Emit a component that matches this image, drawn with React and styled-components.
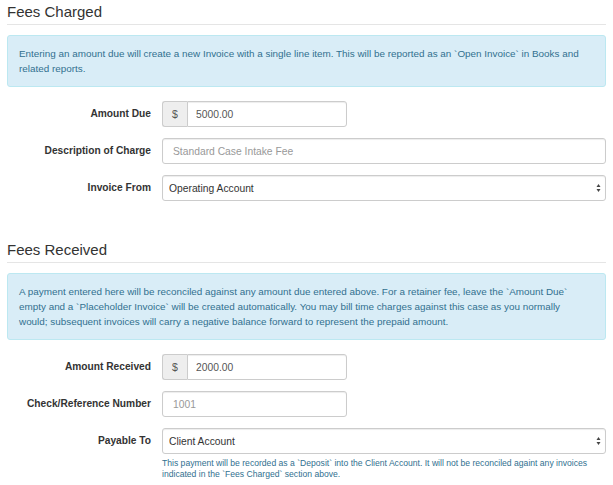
import styled, { createGlobalStyle } from "styled-components";

const GlobalStyle = createGlobalStyle`
  html, body {
    margin: 0;
    padding: 0;
    background: #fff;
  }
  body {
    font-family: "Liberation Sans", Arial, Helvetica, sans-serif;
    font-size: 10.5px;
    line-height: 15px;
    color: #333;
  }
  * {
    box-sizing: border-box;
  }
`;

const Page = styled.div`
  padding: 0 7px;
  width: 613px;
`;

const Section = styled.fieldset`
  border: 0;
  margin: 0;
  padding: 0;
  min-width: 0;
  & + & {
    margin-top: 37px;
  }
`;

const Legend = styled.legend`
  display: block;
  width: 100%;
  padding: 0;
  margin: 0;
  font-size: 15px;
  line-height: 24px;
  color: #333;
  border-bottom: 1px solid #e5e5e5;
`;

const Alert = styled.div`
  margin-top: 10px;
  margin-bottom: 14px;
  padding: 10px 11px;
  background: #d9edf7;
  border: 1px solid #bce8f1;
  border-radius: 3px;
  color: #31708f;
  font-size: 9.9px;
  line-height: 15px;
`;

const Row = styled.div`
  display: grid;
  grid-template-columns: 144px 1fr;
  column-gap: 11px;
  align-items: start;
  & + & {
    margin-top: 11px;
  }
`;

const Label = styled.label`
  text-align: right;
  font-weight: bold;
  font-size: 10.2px;
  line-height: 26px;
  color: #333;
`;

const Field = styled.div`
  width: ${(p) => (p.$short ? "185px" : "100%")};
`;

const InputGroup = styled.div`
  display: flex;
  height: 26px;
`;

const Addon = styled.span`
  width: 25px;
  flex: none;
  display: flex;
  align-items: center;
  justify-content: center;
  background: #eee;
  border: 1px solid #ccc;
  border-right: 0;
  border-radius: 3px 0 0 3px;
  color: #555;
  font-size: 10.5px;
`;

const Input = styled.input`
  display: block;
  width: 100%;
  height: 26px;
  min-width: 0;
  padding: 0 9px;
  font-family: inherit;
  font-size: 10.3px;
  color: #555;
  background: #fff;
  border: 1px solid #ccc;
  border-radius: ${(p) => (p.$joined ? "0 3px 3px 0" : "3px")};
  box-shadow: inset 0 1px 1px rgba(0, 0, 0, 0.075);
  outline: none;
  padding-left: ${(p) => (p.$joined ? "8px" : "10px")};
  &::placeholder {
    color: #999;
  }
`;

const SelectWrap = styled.div`
  position: relative;
  height: 26px;
`;

const Select = styled.select`
  appearance: none;
  -webkit-appearance: none;
  display: block;
  width: 100%;
  height: 26px;
  padding: 0 24px 0 6px;
  font-family: inherit;
  font-size: 10.3px;
  color: #333;
  background: #fff;
  border: 1px solid #ccc;
  border-radius: 3px;
  box-shadow: inset 0 1px 1px rgba(0, 0, 0, 0.075);
  outline: none;
`;

const Arrows = styled.svg`
  position: absolute;
  right: 5px;
  top: 8px;
  pointer-events: none;
`;

const Help = styled.p`
  margin: 4px 0 0;
  font-size: 8.6px;
  line-height: 11px;
  color: #31708f;
`;

const SelectBox = ({ value }) => (
  <SelectWrap>
    <Select defaultValue={value}>
      <option>{value}</option>
    </Select>
    <Arrows width="5" height="10" viewBox="0 0 5 10">
      <path d="M2.5 1 L4.5 4 L0.5 4 Z" fill="#444" />
      <path d="M2.5 9 L4.5 6 L0.5 6 Z" fill="#444" />
    </Arrows>
  </SelectWrap>
);

const Money = ({ value }) => (
  <Field $short>
    <InputGroup>
      <Addon>$</Addon>
      <Input $joined defaultValue={value} />
    </InputGroup>
  </Field>
);

export default function App() {
  return (
    <>
      <GlobalStyle />
      <Page>
        <Section>
          <Legend>Fees Charged</Legend>
          <Alert>
            Entering an amount due will create a new Invoice with a single line
            item. This will be reported as an `Open Invoice` in Books and
            related reports.
          </Alert>
          <Row>
            <Label>Amount Due</Label>
            <Money value="5000.00" />
          </Row>
          <Row>
            <Label>Description of Charge</Label>
            <Field>
              <Input placeholder="Standard Case Intake Fee" />
            </Field>
          </Row>
          <Row>
            <Label>Invoice From</Label>
            <Field>
              <SelectBox value="Operating Account" />
            </Field>
          </Row>
        </Section>

        <Section>
          <Legend>Fees Received</Legend>
          <Alert>
            A payment entered here will be reconciled against any amount due
            entered above. For a retainer fee, leave the `Amount Due`
            <br />
            empty and a `Placeholder Invoice` will be created automatically. You
            may bill time charges against this case as you normally
            <br />
            would; subsequent invoices will carry a negative balance forward to
            represent the prepaid amount.
          </Alert>
          <Row>
            <Label>Amount Received</Label>
            <Money value="2000.00" />
          </Row>
          <Row>
            <Label>Check/Reference Number</Label>
            <Field $short>
              <Input placeholder="1001" />
            </Field>
          </Row>
          <Row>
            <Label>Payable To</Label>
            <Field>
              <SelectBox value="Client Account" />
              <Help>
                This payment will be recorded as a `Deposit` into the Client
                Account. It will not be reconciled againt any invoices
                indicated in the `Fees Charged` section above.
              </Help>
            </Field>
          </Row>
        </Section>
      </Page>
    </>
  );
}
